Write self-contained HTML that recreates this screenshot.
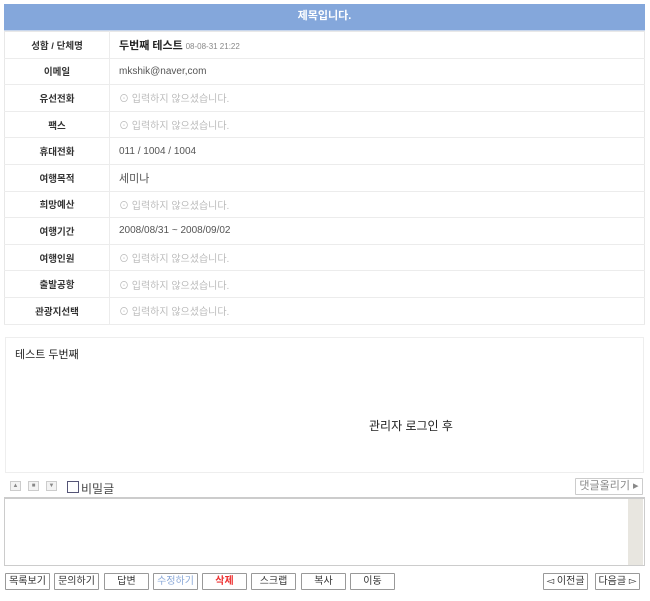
<!DOCTYPE html>
<html><head><meta charset="utf-8"><style>
*{margin:0;padding:0;box-sizing:border-box}
body{width:650px;height:601px;background:#fff;position:relative;overflow:hidden;font-family:"Liberation Sans","Noto Sans CJK KR",sans-serif;font-size:11px;color:#333}
.hd{position:absolute;left:4px;top:4px;width:641px;height:27px;background:#84a7db;color:#fff;font-weight:bold;font-size:11px;text-align:center;line-height:25px;border-bottom:1px solid #c8d6ec}
table{position:absolute;left:4px;top:31px;width:641px;border-collapse:collapse;border:1px solid #e8e8e8}
td{height:26.6px;border-bottom:1px solid #ececec;font-size:10px;vertical-align:middle}
td.l{width:105px;text-align:center;font-weight:bold;color:#333;border-right:1px solid #ececec;font-size:9.5px}
td.v{padding-left:9px;color:#555}
td.g{padding-left:9px;color:#bbb}
.box{position:absolute;left:5px;top:337px;width:639px;height:136px;border:1px solid #eee}
.btn{position:absolute;height:17px;border:1px solid #999;background:#fff;font-size:10px;text-align:center;line-height:15px;color:#333;border-radius:1px}
.sb{position:absolute;top:481px;width:11px;height:10px;border:1px solid #ccc;background:#f3f3f3;font-size:6px;line-height:8px;text-align:center;color:#888}
</style></head><body>
<div class="hd">제목입니다.</div>
<table>
<tr><td class="l">성함 / 단체명</td><td class="v"><span style="color:#222;font-size:11px;font-weight:bold">두번째 테스트</span> <span style="font-size:8px;color:#888">08-08-31 21:22</span></td></tr>
<tr><td class="l">이메일</td><td class="v">mkshik@naver,com</td></tr>
<tr><td class="l">유선전화</td><td class="g">⊙ 입력하지 않으셨습니다.</td></tr>
<tr><td class="l">팩스</td><td class="g">⊙ 입력하지 않으셨습니다.</td></tr>
<tr><td class="l">휴대전화</td><td class="v">011 / 1004 / 1004</td></tr>
<tr><td class="l">여행목적</td><td class="v" style="font-size:11px">세미나</td></tr>
<tr><td class="l">희망예산</td><td class="g">⊙ 입력하지 않으셨습니다.</td></tr>
<tr><td class="l">여행기간</td><td class="v">2008/08/31 ~ 2008/09/02</td></tr>
<tr><td class="l">여행인원</td><td class="g">⊙ 입력하지 않으셨습니다.</td></tr>
<tr><td class="l">출발공항</td><td class="g">⊙ 입력하지 않으셨습니다.</td></tr>
<tr><td class="l">관광지선택</td><td class="g">⊙ 입력하지 않으셨습니다.</td></tr>
</table>
<div class="box">
<div style="position:absolute;left:9px;top:8px;font-size:11px;color:#222">테스트 두번째</div>
<div style="position:absolute;left:363px;top:79px;font-size:12px;color:#222">관리자 로그인 후</div>
</div>
<div class="sb" style="left:10px">▲</div><div class="sb" style="left:28px">■</div><div class="sb" style="left:46px">▼</div>
<div style="position:absolute;left:67px;top:481px;width:12px;height:12px;border:1px solid #557"></div>
<div style="position:absolute;left:81px;top:480px;font-size:12px;color:#444">비밀글</div>
<div class="btn" style="left:575px;top:478px;width:68px;height:17px;border-color:#ccc;color:#888;font-size:11px">댓글올리기 ▸</div>
<div style="position:absolute;left:4px;top:497px;width:641px;height:69px;border:1px solid #ccc;border-top-width:2px"></div>
<div style="position:absolute;left:628px;top:499px;width:15px;height:66px;background:#e8e6e0"></div>
<div class="btn" style="left:5px;top:573px;width:45px">목록보기</div>
<div class="btn" style="left:54px;top:573px;width:45px">문의하기</div>
<div class="btn" style="left:104px;top:573px;width:45px">답변</div>
<div class="btn" style="left:153px;top:573px;width:45px;color:#8aa8d8">수정하기</div>
<div class="btn" style="left:202px;top:573px;width:45px;color:#e33;font-weight:bold">삭제</div>
<div class="btn" style="left:251px;top:573px;width:45px">스크랩</div>
<div class="btn" style="left:301px;top:573px;width:45px">복사</div>
<div class="btn" style="left:350px;top:573px;width:45px">이동</div>
<div class="btn" style="left:543px;top:573px;width:45px">◅ 이전글</div>
<div class="btn" style="left:595px;top:573px;width:45px">다음글 ▻</div>
</body></html>
